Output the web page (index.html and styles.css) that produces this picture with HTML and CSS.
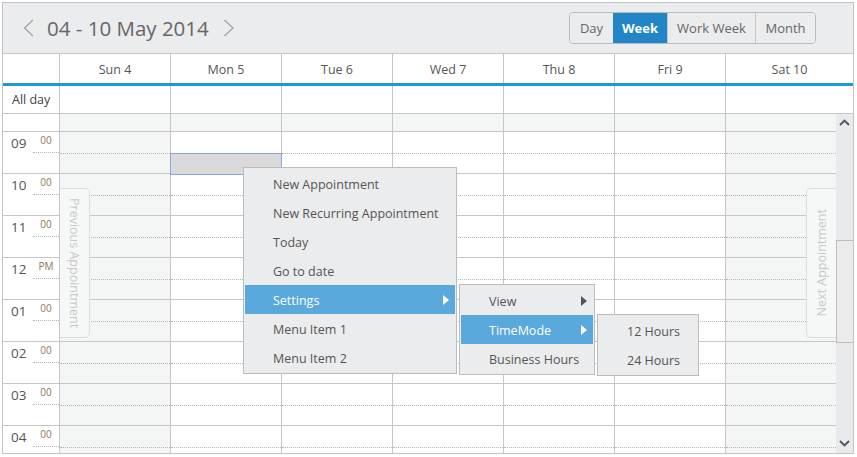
FILE: index.html
```html
<!DOCTYPE html>
<html>
<head>
<meta charset="utf-8">
<link rel="stylesheet" href="styles.css">
</head>
<body>
<div class="scheduler">
  <div class="toolbar">
    <div class="nav">
      <svg class="chev" width="12" height="18" viewBox="0 0 12 18"><path d="M10 1 L1.5 9 L10 17" fill="none" stroke="#a3a3a3" stroke-width="1.3"/></svg>
      <span class="title">04 - 10 May 2014</span>
      <svg class="chev next-chev" width="12" height="18" viewBox="0 0 12 18"><path d="M1.5 1 L10 9 L1.5 17" fill="none" stroke="#a3a3a3" stroke-width="1.3"/></svg>
    </div>
    <div class="views">
      <div class="view v-day">Day</div>
      <div class="view v-week active">Week</div>
      <div class="view v-work">Work Week</div>
      <div class="view v-month">Month</div>
    </div>
  </div>

  <div class="dayhead">
    <div class="corner"></div>
    <div class="dh">Sun 4</div>
    <div class="dh">Mon 5</div>
    <div class="dh">Tue 6</div>
    <div class="dh">Wed 7</div>
    <div class="dh">Thu 8</div>
    <div class="dh">Fri 9</div>
    <div class="dh last">Sat 10</div>
  </div>

  <div class="allday">
    <div class="ad-label">All day</div>
    <div class="ad-cell"></div>
    <div class="ad-cell"></div>
    <div class="ad-cell"></div>
    <div class="ad-cell"></div>
    <div class="ad-cell"></div>
    <div class="ad-cell"></div>
    <div class="ad-cell last"></div>
  </div>

  <div class="body">
    <div class="grid">
      <div class="timecol">
        <div class="partial"></div>
        <div class="thr"><div class="tlab"><span class="h">09</span><span class="m">00</span></div></div>
        <div class="thr"><div class="tlab"><span class="h">10</span><span class="m">00</span></div></div>
        <div class="thr"><div class="tlab"><span class="h">11</span><span class="m">00</span></div></div>
        <div class="thr"><div class="tlab"><span class="h">12</span><span class="m">PM</span></div></div>
        <div class="thr"><div class="tlab"><span class="h">01</span><span class="m">00</span></div></div>
        <div class="thr"><div class="tlab"><span class="h">02</span><span class="m">00</span></div></div>
        <div class="thr"><div class="tlab"><span class="h">03</span><span class="m">00</span></div></div>
        <div class="thr"><div class="tlab"><span class="h">04</span><span class="m">00</span></div></div>
      </div>
      <div class="daycol weekend">
        <div class="partial"></div>
        <div class="hr"></div><div class="hr"></div><div class="hr"></div><div class="hr"></div>
        <div class="hr"></div><div class="hr"></div><div class="hr"></div><div class="hr"></div>
      </div>
      <div class="daycol">
        <div class="partial"></div>
        <div class="hr"><div class="sel"></div></div><div class="hr"></div><div class="hr"></div><div class="hr"></div>
        <div class="hr"></div><div class="hr"></div><div class="hr"></div><div class="hr"></div>
      </div>
      <div class="daycol">
        <div class="partial"></div>
        <div class="hr"></div><div class="hr"></div><div class="hr"></div><div class="hr"></div>
        <div class="hr"></div><div class="hr"></div><div class="hr"></div><div class="hr"></div>
      </div>
      <div class="daycol">
        <div class="partial"></div>
        <div class="hr"></div><div class="hr"></div><div class="hr"></div><div class="hr"></div>
        <div class="hr"></div><div class="hr"></div><div class="hr"></div><div class="hr"></div>
      </div>
      <div class="daycol">
        <div class="partial"></div>
        <div class="hr"></div><div class="hr"></div><div class="hr"></div><div class="hr"></div>
        <div class="hr"></div><div class="hr"></div><div class="hr"></div><div class="hr"></div>
      </div>
      <div class="daycol">
        <div class="partial"></div>
        <div class="hr"></div><div class="hr"></div><div class="hr"></div><div class="hr"></div>
        <div class="hr"></div><div class="hr"></div><div class="hr"></div><div class="hr"></div>
      </div>
      <div class="daycol weekend sat">
        <div class="partial"></div>
        <div class="hr"></div><div class="hr"></div><div class="hr"></div><div class="hr"></div>
        <div class="hr"></div><div class="hr"></div><div class="hr"></div><div class="hr"></div>
      </div>
    </div>
    <div class="sb">
      <div class="sb-btn sb-up"><svg width="11" height="7" viewBox="0 0 11 7"><path d="M1 6 L5.5 1.5 L10 6" fill="none" stroke="#4b5563" stroke-width="1.8"/></svg></div>
      <div class="sb-track"><div class="sb-thumb"></div></div>
      <div class="sb-btn sb-down"><svg width="11" height="7" viewBox="0 0 11 7"><path d="M1 1 L5.5 5.5 L10 1" fill="none" stroke="#4b5563" stroke-width="1.8"/></svg></div>
    </div>
    <div class="navtab prev"><span>Previous Appointment</span></div>
    <div class="navtab next"><span>Next Appointment</span></div>
  </div>

  <div class="menu ctx">
    <div class="mi">New Appointment</div>
    <div class="mi">New Recurring Appointment</div>
    <div class="mi">Today</div>
    <div class="mi">Go to date</div>
    <div class="mi active sub">Settings</div>
    <div class="mi">Menu Item 1</div>
    <div class="mi">Menu Item 2</div>
  </div>
  <div class="menu sub1">
    <div class="mi sub">View</div>
    <div class="mi active sub">TimeMode</div>
    <div class="mi">Business Hours</div>
  </div>
  <div class="menu sub2">
    <div class="mi">12 Hours</div>
    <div class="mi">24 Hours</div>
  </div>
</div>
</body>
</html>
```

FILE: styles.css
```css
* { box-sizing: border-box; }
body {
  margin: 0;
  background: #fff;
  font-family: "Open Sans", "Noto Sans", sans-serif;
}
.scheduler {
  position: relative;
  margin: 2px 0 0 2px;
  width: 852px;
  height: 452px;
  border: 1px solid #c3c3c3;
  display: flex;
  flex-direction: column;
  overflow: hidden;
}

/* toolbar */
.toolbar {
  flex: none;
  height: 51px;
  background: #ebecee;
  border-bottom: 1px solid #c6c6c6;
  display: flex;
  align-items: center;
  justify-content: space-between;
  padding: 0 37px 0 20px;
}
.nav { display: flex; align-items: center; }
.chev { display: block; }
.title {
  margin: 0 14px 0 12px;
  font-size: 20.5px;
  color: #666;
  line-height: 26px;
}
.views {
  display: flex;
  height: 32px;
  border: 1px solid #bcbcbc;
  border-radius: 4px;
  overflow: hidden;
}
.view {
  font-size: 13px;
  color: #666;
  line-height: 30px;
  text-align: center;
  background: #ebecee;
}
.v-day { width: 43px; }
.v-week { width: 54px; }
.v-work { width: 88px; border-left: 1px solid #c6c6c6; }
.v-month { width: 60px; border-left: 1px solid #c6c6c6; }
.view.active { background: #2185c7; color: #fff; font-weight: 700; }

/* day header */
.dayhead {
  flex: none;
  height: 32px;
  display: flex;
  border-bottom: 3px solid #1c9ad6;
}
.corner { width: 57px; border-right: 1px solid #c6c6c6; }
.dh {
  width: 111px;
  border-right: 1px solid #c6c6c6;
  text-align: center;
  font-size: 12.5px;
  line-height: 29px;
  padding-top: 1px;
  color: #555;
}
.dh.last { flex: 1; border-right: none; }

/* all day */
.allday {
  flex: none;
  height: 28px;
  display: flex;
  border-bottom: 1px solid #c6c6c6;
}
.ad-label {
  width: 57px;
  border-right: 1px solid #c6c6c6;
  padding-left: 9px;
  font-size: 12.5px;
  line-height: 27px;
  color: #444;
}
.ad-cell { width: 111px; border-right: 1px solid #c6c6c6; }
.ad-cell.last { flex: 1; border-right: none; }

/* body */
.body {
  flex: 1;
  position: relative;
  display: flex;
  overflow: hidden;
}
.grid {
  width: 833px;
  display: flex;
  align-items: flex-start;
  overflow: hidden;
}
.timecol { width: 57px; flex: none; border-right: 1px solid #c6c6c6; }
.daycol { width: 111px; flex: none; border-right: 1px solid #c6c6c6; }
.daycol.sat { width: 110px; border-right: none; }
.partial { height: 18px; border-bottom: 1px solid #c6c6c6; }
.daycol .partial { background: #f4f5f5; }
.daycol.weekend { background: #f4f5f5; }
.hr { height: 42px; border-bottom: 1px solid #c6c6c6; }
.hr::before {
  content: "";
  display: block;
  height: 21px;
  border-bottom: 1px dotted #b5b5b5;
}
.sel { position: relative; height: 20px; background: #dadada; }
.sel::after {
  content: "";
  position: absolute;
  top: -1px; left: -1px; right: -1px; bottom: -1px;
  border: 1px solid #86a7e2;
}
.thr { height: 42px; border-bottom: 1px solid #c6c6c6; }
.tlab { display: flex; height: 21px; }
.h {
  width: 30px;
  padding-left: 8px;
  font-size: 13.5px;
  line-height: 20px;
  padding-top: 1px;
  color: #555;
}
.m {
  flex: 1;
  border-bottom: 1px dotted #b5b5b5;
  text-align: center;
  font-size: 10px;
  line-height: 14px;
  padding-top: 1px;
  color: #8f7656;
}

/* scrollbar */
.sb {
  width: 17px;
  flex: none;
  background: #e9eaeb;
  display: flex;
  flex-direction: column;
}
.sb-btn {
  height: 17px;
  flex: none;
  display: flex;
  align-items: center;
  justify-content: center;
}
.sb-up { padding-bottom: 1px; }
.sb-down { padding-bottom: 3px; }
.sb-track { flex: 1; }
.sb-thumb {
  margin-top: 109px;
  height: 103px;
  background: #ebebeb;
  border: 1px solid #bdbdbd;
  border-right: none;
}

/* prev / next tabs */
.navtab {
  position: absolute;
  top: 74px;
  width: 30px;
  height: 150px;
  background: #f6f7f7;
  border: 1px solid #dcdcdc;
  color: #c8c8c8;
  font-size: 12.5px;
  display: flex;
  align-items: center;
  justify-content: center;
}
.navtab span { writing-mode: vertical-rl; white-space: nowrap; }
.navtab.prev { left: 57px; border-left: none; border-radius: 0 5px 5px 0; }
.navtab.next { right: 17px; border-right: none; border-radius: 5px 0 0 5px; }
.navtab.next span { transform: rotate(180deg); }

/* menus */
.menu {
  position: absolute;
  background: #ebecee;
  border: 1px solid #bcbcbc;
  padding: 1px;
}
.ctx { left: 240px; top: 164px; width: 214px; }
.sub1 { left: 456px; top: 281px; width: 136px; }
.sub2 { left: 594px; top: 311px; width: 102px; }
.mi {
  position: relative;
  height: 29px;
  line-height: 27px;
  padding-top: 2px;
  padding-left: 28px;
  font-size: 12.5px;
  color: #555;
  white-space: nowrap;
}
.mi.active { background: #5aa9dd; color: #fff; }
.mi.sub::after {
  content: "";
  position: absolute;
  right: 6px;
  top: 10px;
  border-left: 6px solid #555;
  border-top: 5px solid transparent;
  border-bottom: 5px solid transparent;
}
.mi.active.sub::after { border-left-color: #fff; }
```
